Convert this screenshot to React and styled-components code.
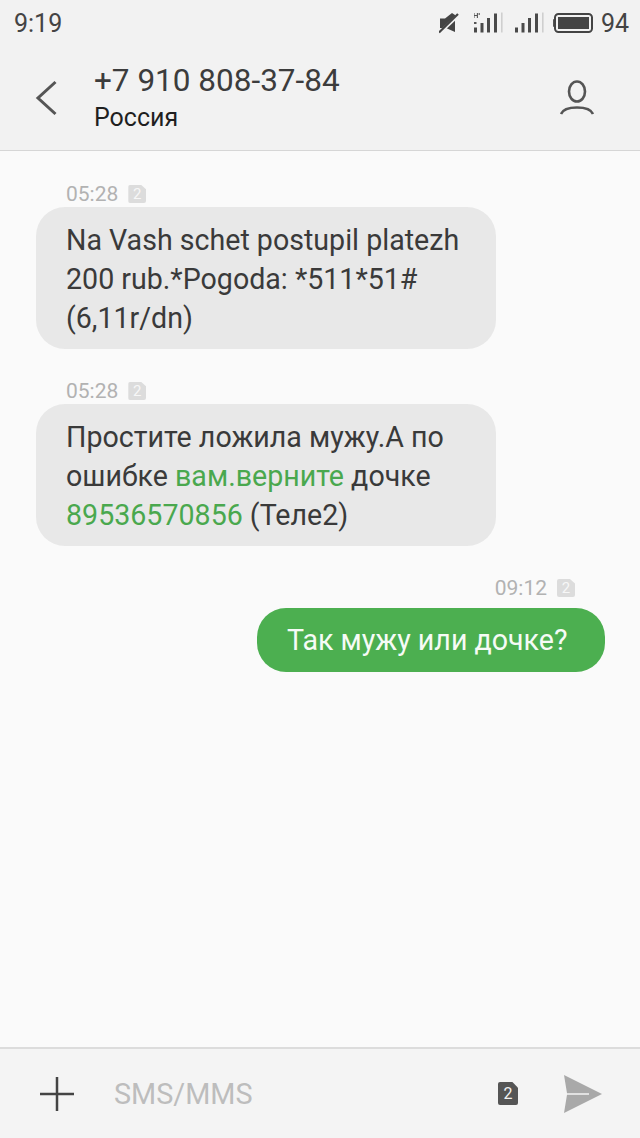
import React from 'react';
import styled, { createGlobalStyle } from 'styled-components';

const Global = createGlobalStyle`
  html, body { margin: 0; padding: 0; background: #fafafa; }
  body { font-family: Roboto, "Liberation Sans", sans-serif; }
`;

function SimCorner({ dark, className }) {
  return (
    <SimBox className={className} $dark={dark}>2</SimBox>
  );
}

function Signal({ hplus }) {
  return (
    <svg width="30" height="22" viewBox="0 0 30 22">
      {hplus && <path d="M0 1V6M3.4 1V6M0 3.5H3.4M5.2 1V3" stroke="#555" strokeWidth="1.1" fill="none" />}
      {hplus && <rect x="0" y="10" width="2.5" height="2" fill="#555" />}
      <rect x="0" y="15.5" width="3" height="5" fill="#4a4a4a" />
      <rect x="6.5" y="11" width="3" height="9.5" fill="#4a4a4a" />
      <rect x="13" y="6" width="3" height="14.5" fill="#4a4a4a" />
      <rect x="20" y="1.5" width="3" height="19" fill="#4a4a4a" />
      <rect x="27" y="0.5" width="1.6" height="20" fill="#cfcfcf" />
    </svg>
  );
}

function Message({ time, align, children }) {
  const mine = align === 'right';
  return (
    <MessageWrap $mine={mine}>
      <Meta $mine={mine}>
        <span>{time}</span>
        <SimCorner />
      </Meta>
      <Bubble $mine={mine}>{children}</Bubble>
    </MessageWrap>
  );
}

export default function App() {
  return (
    <Screen>
      <Global />
      <TopArea>
        <StatusBar>
          <Clock>9:19</Clock>
          <StatusIcons>
            <MuteSlot>
              <svg width="20" height="22" viewBox="0 0 20 22">
                <path d="M1 6.5 L6 6.5 L13 1 L16 3 V20 L7 16 H1 Z" fill="#444" />
                <path d="M0 21.5 L19 3.5" stroke="#f2f2f2" strokeWidth="3.4" />
                <path d="M0 20.5 L19 2" stroke="#444" strokeWidth="2.2" />
              </svg>
            </MuteSlot>
            <SignalSlot><Signal hplus /></SignalSlot>
            <SignalSlot $gap={11}><Signal /></SignalSlot>
            <BatterySlot>
              <svg width="40" height="20" viewBox="0 0 40 20">
                <rect x="0" y="6" width="2" height="8" rx="1" fill="#555" />
                <rect x="2" y="1" width="37" height="18" rx="3.5" fill="none" stroke="#444" strokeWidth="2" />
                <rect x="5" y="4" width="31" height="12" fill="#444" />
              </svg>
            </BatterySlot>
            <Battery>94</Battery>
          </StatusIcons>
        </StatusBar>
        <Header>
          <BackButton>
            <svg width="24" height="36" viewBox="0 0 24 36">
              <path d="M22.5 2 L5 18 L22.5 34" fill="none" stroke="#555" strokeWidth="3" />
            </svg>
          </BackButton>
          <Contact>
            <Phone>+7 910 808-37-84</Phone>
            <Country>Россия</Country>
          </Contact>
          <ContactIcon>
            <svg width="36" height="36" viewBox="0 0 36 36">
              <ellipse cx="18" cy="11.5" rx="8" ry="10" fill="none" stroke="#555" strokeWidth="2.6" />
              <path d="M2 34 C4 29 11 27.5 18 27.5 C25 27.5 32 29 34 34" fill="none" stroke="#555" strokeWidth="2.6" />
            </svg>
          </ContactIcon>
        </Header>
      </TopArea>
      <Thread>
        <Message time="05:28">Na Vash schet postupil platezh 200 rub.*Pogoda: *511*51# (6,11r/dn)</Message>
        <Message time="05:28">
          Простите ложила мужу.А по ошибке <Link>вам.верните</Link> дочке <Link>89536570856</Link> (Теле2)
        </Message>
        <Message time="09:12" align="right">Так мужу или дочке?</Message>
      </Thread>
      <Composer>
        <AddButton>
          <svg width="34" height="34" viewBox="0 0 34 34">
            <path d="M0 17H34M17 0V34" stroke="#444" strokeWidth="2.5" />
          </svg>
        </AddButton>
        <Placeholder>SMS/MMS</Placeholder>
        <SimPicked dark />
        <SendButton>
          <svg width="40" height="38" viewBox="0 0 40 38">
            <path d="M1 0 L39 19 L1 38 L4 19.8 H26 V18.2 H4 Z" fill="#a9a9a9" />
          </svg>
        </SendButton>
      </Composer>
    </Screen>
  );
}

const Screen = styled.div`
  width: 640px;
  height: 1138px;
  display: flex;
  flex-direction: column;
  background: #fafafa;
  overflow: hidden;
`;

const TopArea = styled.div`
  background: #f2f2f2;
  border-bottom: 1px solid #d6d6d6;
  height: 150px;
  flex: none;
`;

const StatusBar = styled.div`
  height: 46px;
  display: flex;
  align-items: center;
  justify-content: space-between;
  padding: 0 11px 0 14px;
  color: #444;
  font-size: 25px;
`;

const Clock = styled.span``;

const StatusIcons = styled.div`
  display: flex;
  align-items: center;
`;

const MuteSlot = styled.div`
  display: flex;
  margin-right: 15px;
`;

const SignalSlot = styled.div`
  display: flex;
  margin-left: ${p => p.$gap || 0}px;
`;

const BatterySlot = styled.div`
  display: flex;
  margin: 0 8px;
`;

const Battery = styled.span``;

const Header = styled.div`
  height: 104px;
  display: flex;
  align-items: flex-start;
`;

const BackButton = styled.div`
  width: 94px;
  padding: 34px 0 0 33px;
  box-sizing: border-box;
  flex: none;
`;

const Contact = styled.div`
  flex: 1;
  padding-top: 15px;
`;

const Phone = styled.div`
  font-size: 31.5px;
  line-height: 40px;
  color: #3c3c3c;
`;

const Country = styled.div`
  font-size: 25px;
  line-height: 33px;
  color: #1f1f1f;
`;

const ContactIcon = styled.div`
  width: 36px;
  margin: 34px 45px 0 0;
`;

const Thread = styled.div`
  flex: 1;
  padding: 30px 35px 0 36px;
  display: flex;
  flex-direction: column;
  gap: 29px;
`;

const MessageWrap = styled.div`
  display: flex;
  flex-direction: column;
  align-items: ${p => (p.$mine ? 'flex-end' : 'flex-start')};
`;

const Meta = styled.div`
  display: flex;
  align-items: center;
  gap: 10px;
  height: 26px;
  margin-bottom: ${p => (p.$mine ? '7px' : '0')};
  color: #b2b2b2;
  font-size: 21px;
  padding: ${p => (p.$mine ? '0 30px 0 0' : '0 0 0 30px')};
`;

const SimBox = styled.span`
  width: 18px;
  height: 18px;
  display: inline-flex;
  align-items: center;
  justify-content: center;
  border-radius: 2px;
  clip-path: polygon(0 0, 72% 0, 100% 25%, 100% 100%, 0 100%);
  font-size: 15px;
  color: ${p => (p.$dark ? '#f2f2f2' : '#f7f7f7')};
  background: ${p => (p.$dark ? '#555' : '#dcdcdc')};
`;

const Bubble = styled.div`
  box-sizing: border-box;
  width: ${p => (p.$mine ? '348px' : '460px')};
  padding: ${p => (p.$mine ? '13px 0 12px 30px' : '14px 30px 11px')};
  border-radius: 29px;
  font-size: 28.6px;
  line-height: 39px;
  color: ${p => (p.$mine ? '#f6fbf6' : '#3a3a3a')};
  background: ${p => (p.$mine ? '#4caf50' : '#e8e8e8')};
`;

const Link = styled.span`
  color: #4aa84e;
`;

const Composer = styled.div`
  height: 89px;
  flex: none;
  background: #f4f4f4;
  border-top: 2px solid #dcdcdc;
  display: flex;
  align-items: center;
`;

const AddButton = styled.div`
  width: 114px;
  padding-left: 40px;
  box-sizing: border-box;
  flex: none;
  display: flex;
`;

const Placeholder = styled.div`
  flex: 1;
  font-size: 28.8px;
  color: #bdbdbd;
`;

const SimPicked = styled(SimCorner)`
  width: 20px;
  height: 23px;
  margin-right: 45px;
  font-size: 16px;
`;

const SendButton = styled.div`
  width: 40px;
  margin-right: 37px;
  display: flex;
`;
